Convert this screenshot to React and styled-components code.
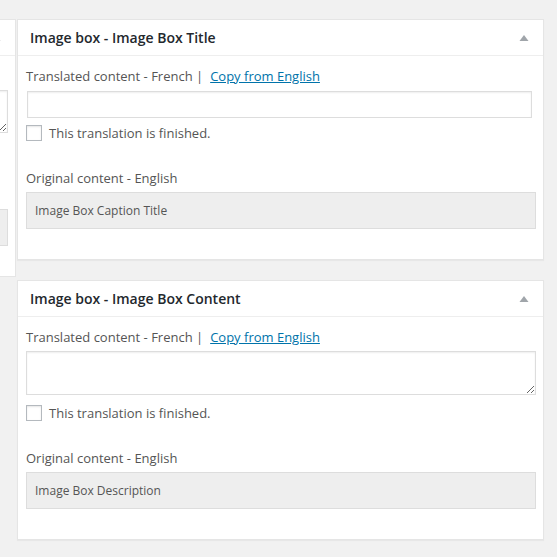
import React from "react";
import styled, { createGlobalStyle } from "styled-components";

const GlobalStyle = createGlobalStyle`
  html, body { margin: 0; padding: 0; }
  body {
    background: #f1f1f1;
    font-family: "Open Sans", "Noto Sans", sans-serif;
    color: #555;
  }
`;

const Page = styled.div`
  display: flex;
  align-items: flex-start;
  gap: 1px;
  padding-top: 19px;
  width: 557px;
  height: 557px;
  overflow: hidden;
  box-sizing: border-box;
`;

const LeftClip = styled.div`
  width: 16px;
  flex-shrink: 0;
  overflow: hidden;
`;

const Column = styled.div`
  display: flex;
  flex-direction: column;
  gap: 20px;
  width: 527px;
  flex-shrink: 0;
`;

const Panel = styled.section`
  width: 527px;
  box-sizing: border-box;
  flex-shrink: 0;
  background: #fff;
  border: 1px solid #e5e5e5;
  box-shadow: 0 1px 1px rgba(0, 0, 0, 0.04);
  margin-left: ${(p) => (p.$offset ? `${p.$offset}px` : "0")};
`;

const Header = styled.header`
  height: 35px;
  border-bottom: 1px solid #eee;
  display: flex;
  align-items: center;
  justify-content: space-between;
  padding: 0 14px 0 12px;
`;

const Title = styled.h2`
  margin: 0;
  font-size: 14px;
  font-weight: 600;
  color: #23282d;
  line-height: 19px;
  min-height: 19px;
`;

const Toggle = styled.svg`
  width: 10px;
  height: 8px;
  display: block;
`;

const Body = styled.div`
  padding: 11px 7px 30px 8px;
  display: flex;
  flex-direction: column;
`;

const Label = styled.div`
  font-size: 13px;
  line-height: 18px;
  height: 18px;
  color: #555;
  margin-top: ${(p) => p.$top || 0}px;
  white-space: nowrap;
`;

const Link = styled.a`
  color: #0073aa;
  text-decoration: underline;
  margin-left: 7px;
  cursor: pointer;
`;

const TextInput = styled.input`
  display: block;
  box-sizing: border-box;
  width: 505px;
  height: 27px;
  margin: 6px 0 0 1px;
  border: 1px solid #ddd;
  box-shadow: inset 0 1px 2px rgba(0, 0, 0, 0.07);
  background: #fff;
  outline: none;
  padding: 3px 5px;
  font: inherit;
`;

const TextArea = styled.textarea`
  display: block;
  box-sizing: border-box;
  width: 510px;
  height: ${(p) => p.$h}px;
  margin: 5px 0 0 0;
  border: 1px solid #ddd;
  box-shadow: inset 0 1px 2px rgba(0, 0, 0, 0.07);
  background: #fff;
  outline: none;
  resize: vertical;
  font: inherit;
  padding: 2px 6px;
`;

const CheckRow = styled.label`
  display: flex;
  align-items: center;
  gap: 7px;
  margin-top: ${(p) => p.$top}px;
  height: 16px;
  font-size: 13px;
  color: #555;
  white-space: nowrap;
`;

const Box = styled.span`
  width: 16px;
  height: 16px;
  box-sizing: border-box;
  border: 1px solid #b4b9be;
  background: #fff;
  box-shadow: inset 0 1px 2px rgba(0, 0, 0, 0.1);
  flex-shrink: 0;
`;

const Original = styled.div`
  margin-top: 5px;
  box-sizing: border-box;
  width: 510px;
  height: 37px;
  background: #eee;
  border: 1px solid #ddd;
  padding: 0 8px;
  font-size: 12px;
  line-height: 35px;
  color: #555;
  white-space: nowrap;
`;

const Arrow = () => (
  <Toggle viewBox="0 0 10 8">
    <path d="M5 1 L9.5 7 L0.5 7 Z" fill="#a0a5aa" />
  </Toggle>
);

const TranslationBox = ({ title, original, multiline, areaHeight = 44, offset, checkGap = 10, stub }) => (
  <Panel $offset={offset}>
    <Header>
      <Title>{stub ? "" : title}</Title>
      <Arrow />
    </Header>
    <Body>
      <Label>
        {stub ? null : (
          <>
            Translated content - French |<Link>Copy from English</Link>
          </>
        )}
      </Label>
      {multiline ? <TextArea $h={areaHeight} /> : <TextInput type="text" />}
      <CheckRow $top={multiline ? checkGap : 7}>
        <Box />
        {stub ? null : "This translation is finished."}
      </CheckRow>
      <Label $top={28}>{stub ? null : "Original content - English"}</Label>
      <Original>{stub ? null : original}</Original>
    </Body>
  </Panel>
);

export default function App() {
  return (
    <>
      <GlobalStyle />
      <Page>
        <LeftClip>
          <TranslationBox multiline stub areaHeight={43} checkGap={9} offset={-511} />
        </LeftClip>
        <Column>
          <TranslationBox title="Image box - Image Box Title" original="Image Box Caption Title" />
          <TranslationBox
            title="Image box - Image Box Content"
            original="Image Box Description"
            multiline
          />
        </Column>
      </Page>
    </>
  );
}
